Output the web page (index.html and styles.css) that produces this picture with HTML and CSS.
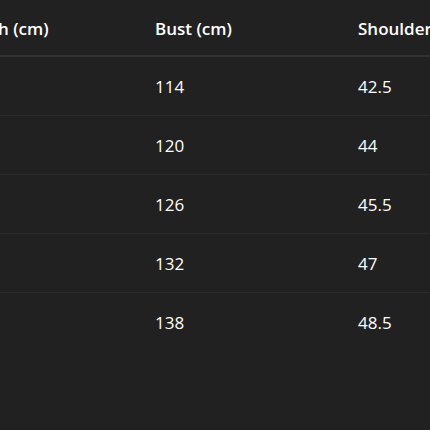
FILE: index.html
```html
<!DOCTYPE html>
<html>
<head>
<meta charset="utf-8">
<link rel="stylesheet" href="styles.css">
</head>
<body>
<div class="table">
  <div class="row head">
    <div class="cell">Length (cm)</div>
    <div class="cell">Bust (cm)</div>
    <div class="cell">Shoulder (cm)</div>
  </div>
  <div class="row">
    <div class="cell">68</div>
    <div class="cell">114</div>
    <div class="cell">42.5</div>
  </div>
  <div class="row">
    <div class="cell">70</div>
    <div class="cell">120</div>
    <div class="cell">44</div>
  </div>
  <div class="row">
    <div class="cell">72</div>
    <div class="cell">126</div>
    <div class="cell">45.5</div>
  </div>
  <div class="row">
    <div class="cell">74</div>
    <div class="cell">132</div>
    <div class="cell">47</div>
  </div>
  <div class="row last">
    <div class="cell">76</div>
    <div class="cell">138</div>
    <div class="cell">48.5</div>
  </div>
</div>
</body>
</html>
```
FILE: styles.css
```css
html, body {
  margin: 0;
  padding: 0;
  background: #212121;
  overflow: hidden;
}
body {
  width: 430px;
  height: 430px;
  font-family: "Open Sans", "Noto Sans", sans-serif;
  font-size: 17px;
  color: #ffffff;
}
.table {
  margin-left: -57px;
  width: 650px;
}
.row {
  display: grid;
  grid-template-columns: 203px 203px 203px;
  height: 58px;
  align-items: center;
  border-bottom: 1px solid #2c2c2c;
}
.row.head {
  height: 54px;
  border-bottom: 2px solid #333333;
  font-weight: 600;
  padding-top: 1px;
}
.row.last {
  border-bottom: none;
}
.cell {
  padding-left: 9px;
  white-space: nowrap;
  font-weight: inherit;
}
.row:not(.head) .cell {
  font-weight: 500;
}
```
